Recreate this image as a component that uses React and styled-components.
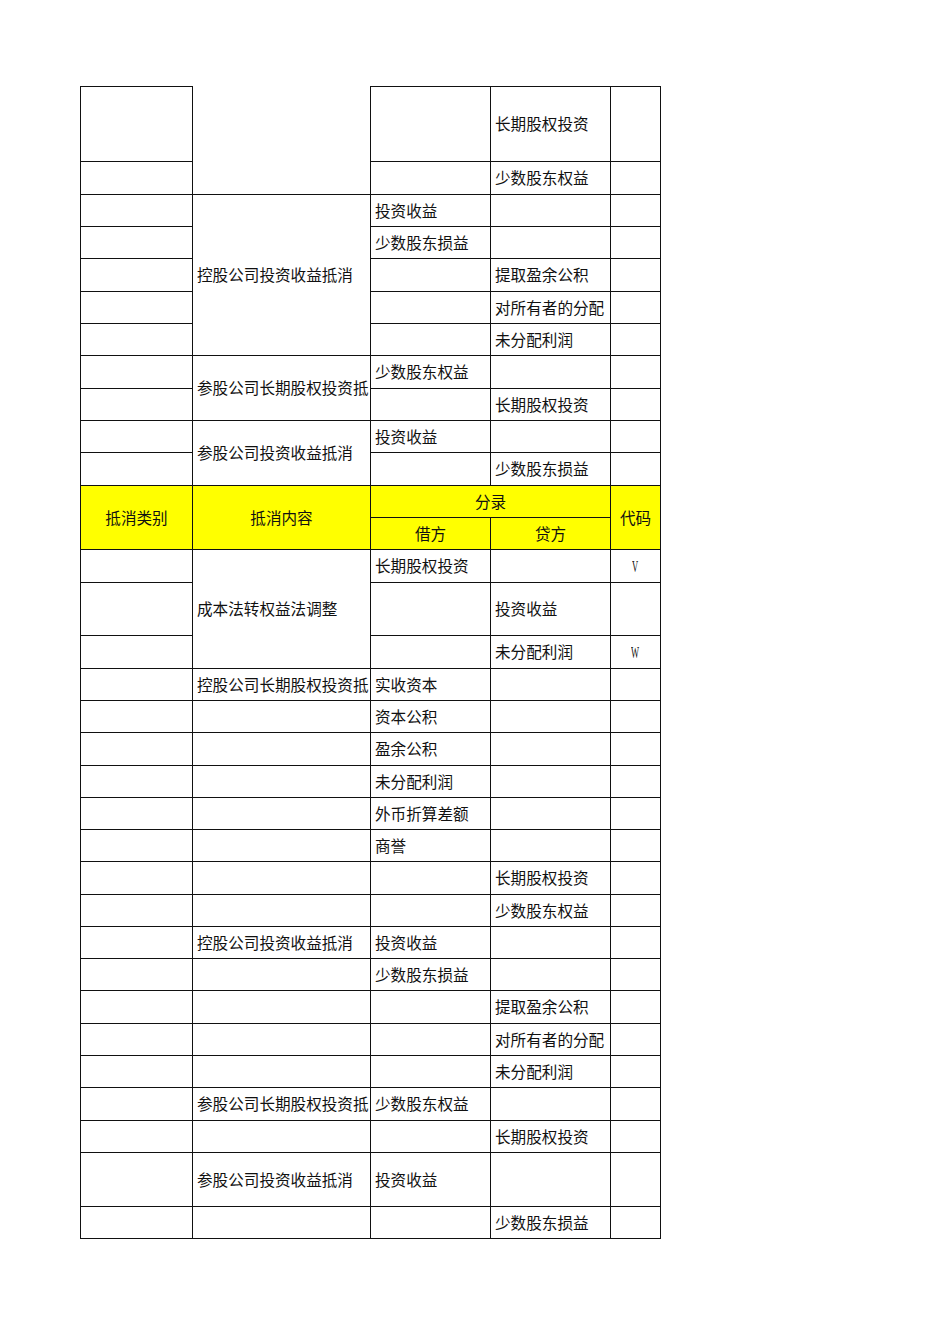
import React from "react"
import styled, { createGlobalStyle } from "styled-components"

const GlobalStyle = createGlobalStyle`
  body {
    margin: 0;
    background: #fff;
  }
`

const Page = styled.div`
  padding: 86px 0 0 80px;
  width: 950px;
  height: 1344px;
  box-sizing: border-box;
  font-family: "Liberation Serif", "Noto Sans CJK SC", serif;
`

const rowHeights = [
  76, 33, 32, 32, 33, 32, 32, 33, 32, 32, 33,
  32, 32,
  33, 53, 33, 32, 32, 33, 32, 32, 32, 33, 32, 32, 32, 33, 32, 32, 33, 32, 54, 32,
]

const Sheet = styled.div`
  display: grid;
  grid-template-columns: 113px 178px 120px 120px 50px;
  grid-template-rows: ${rowHeights.map((h) => h + "px").join(" ")};
  width: 581px;
`

const Cell = styled.div`
  grid-row: ${(p) => p.$r} / span ${(p) => p.$rs || 1};
  grid-column: ${(p) => p.$c} / span ${(p) => p.$cs || 1};
  box-sizing: border-box;
  border-right: 1px solid #111;
  border-bottom: 1px solid #111;
  border-left: ${(p) => (p.$c === 1 ? "1px solid #111" : "none")};
  border-top: ${(p) => (p.$top ? "1px solid #111" : "none")};
  background: ${(p) => (p.$head ? "#ffff00" : "#fff")};
  display: flex;
  align-items: center;
  justify-content: ${(p) => (p.$center ? "center" : "flex-start")};
  padding: 0 0 2px ${(p) => (p.$center ? 0 : 4)}px;
  font-size: 15.6px;
  color: #111;
  white-space: nowrap;
  overflow: hidden;
`

const Code = styled.span`
  display: inline-block;
  margin-top: 4px;
  font-family: "Liberation Serif", serif;
  font-size: 17px;
  transform: scaleX(0.5);
`

// [row, col, text, rowspan, colspan]
const body = [
  [1, 1, ""], [1, 2, "", 2], [1, 3, ""], [1, 4, "长期股权投资"], [1, 5, ""],
  [2, 1, ""], [2, 3, ""], [2, 4, "少数股东权益"], [2, 5, ""],
  [3, 1, ""], [3, 2, "控股公司投资收益抵消", 5], [3, 3, "投资收益"], [3, 4, ""], [3, 5, ""],
  [4, 1, ""], [4, 3, "少数股东损益"], [4, 4, ""], [4, 5, ""],
  [5, 1, ""], [5, 3, ""], [5, 4, "提取盈余公积"], [5, 5, ""],
  [6, 1, ""], [6, 3, ""], [6, 4, "对所有者的分配"], [6, 5, ""],
  [7, 1, ""], [7, 3, ""], [7, 4, "未分配利润"], [7, 5, ""],
  [8, 1, ""], [8, 2, "参股公司长期股权投资抵", 2], [8, 3, "少数股东权益"], [8, 4, ""], [8, 5, ""],
  [9, 1, ""], [9, 3, ""], [9, 4, "长期股权投资"], [9, 5, ""],
  [10, 1, ""], [10, 2, "参股公司投资收益抵消", 2], [10, 3, "投资收益"], [10, 4, ""], [10, 5, ""],
  [11, 1, ""], [11, 3, ""], [11, 4, "少数股东损益"], [11, 5, ""],
]

const header = [
  [12, 1, "抵消类别", 2], [12, 2, "抵消内容", 2], [12, 3, "分录", 1, 2], [12, 5, "代码", 2],
  [13, 3, "借方"], [13, 4, "贷方"],
]

const lower = [
  ["", "", "长期股权投资", "", "V"],
  ["", null, "", "投资收益", ""],
  ["", null, "", "未分配利润", "W"],
  ["", "控股公司长期股权投资抵", "实收资本", "", ""],
  ["", "", "资本公积", "", ""],
  ["", "", "盈余公积", "", ""],
  ["", "", "未分配利润", "", ""],
  ["", "", "外币折算差额", "", ""],
  ["", "", "商誉", "", ""],
  ["", "", "", "长期股权投资", ""],
  ["", "", "", "少数股东权益", ""],
  ["", "控股公司投资收益抵消", "投资收益", "", ""],
  ["", "", "少数股东损益", "", ""],
  ["", "", "", "提取盈余公积", ""],
  ["", "", "", "对所有者的分配", ""],
  ["", "", "", "未分配利润", ""],
  ["", "参股公司长期股权投资抵", "少数股东权益", "", ""],
  ["", "", "", "长期股权投资", ""],
  ["", "参股公司投资收益抵消", "投资收益", "", ""],
  ["", "", "", "少数股东损益", ""],
]

const App = () => {
  const cells = []

  body.forEach(([r, c, text, rs, cs]) => {
    cells.push(
      <Cell key={`b${r}-${c}`} $r={r} $c={c} $rs={rs} $cs={cs} $top={r === 1 && c !== 2}>
        {text}
      </Cell>
    )
  })

  header.forEach(([r, c, text, rs, cs]) => {
    cells.push(
      <Cell key={`h${r}-${c}`} $r={r} $c={c} $rs={rs} $cs={cs} $head $center>
        {text}
      </Cell>
    )
  })

  lower.forEach((row, i) => {
    const r = 14 + i
    row.forEach((text, j) => {
      if (text === null) return
      const c = j + 1
      const rs = i === 0 && c === 2 ? 3 : 1
      const label = i === 0 && c === 2 ? "成本法转权益法调整" : text
      cells.push(
        <Cell key={`l${r}-${c}`} $r={r} $c={c} $rs={rs} $center={c === 5}>
          {c === 5 && label ? <Code>{label}</Code> : label}
        </Cell>
      )
    })
  })

  return (
    <Page>
      <GlobalStyle />
      <Sheet>{cells}</Sheet>
    </Page>
  )
}

export default App
